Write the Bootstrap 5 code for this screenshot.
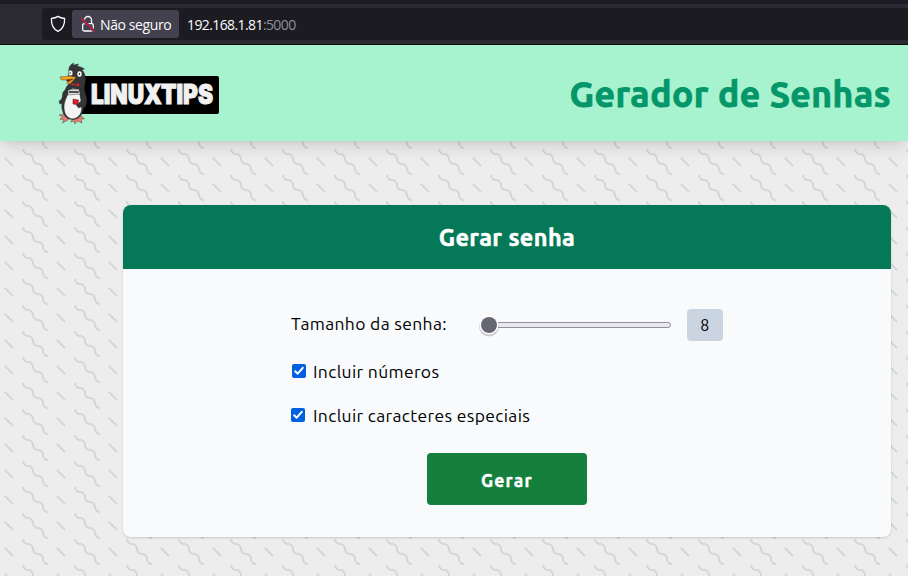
<!DOCTYPE html>
<html lang="pt-BR">
<head>
<meta charset="utf-8">
<meta name="viewport" content="width=device-width, initial-scale=1">
<title>Gerador de Senhas</title>
<link href="https://cdn.jsdelivr.net/npm/bootstrap@5.3.0/dist/css/bootstrap.min.css" rel="stylesheet">
<style>
body{height:576px;overflow:hidden;color:#000;font-family:Ubuntu,"Noto Sans",sans-serif;background:#ededed url("data:image/svg+xml,%3Csvg xmlns='http://www.w3.org/2000/svg' width='52' height='26'%3E%3Cpath fill='%23d3d8d7' d='M10 10c0-2.21-1.79-4-4-4-3.314 0-6-2.686-6-6h2c0 2.21 1.79 4 4 4 3.314 0 6 2.686 6 6 0 2.21 1.79 4 4 4 3.314 0 6 2.686 6 6 0 2.21 1.79 4 4 4v2c-3.314 0-6-2.686-6-6 0-2.21-1.79-4-4-4-3.314 0-6-2.686-6-6zm25.464-1.95l8.486 8.486-1.414 1.414-8.486-8.486 1.414-1.414z'/%3E%3C/svg%3E") 22px 19px}
.browser-bar{height:45px;padding:4px 0 5px 42px;background:#2b2a33;border-top:4px solid #1c1b22;border-bottom:1px solid #0c0c0d;font:14px "Open Sans",sans-serif}
.address{height:32px;background:#1c1b22;border-radius:4px 0 0 4px;color:#fbfbfe;padding-left:8px}
.security{height:28px;width:107px;background:#42414d;border-radius:3px;margin-left:6px;padding-left:8px}
.security span{letter-spacing:-.4px;margin-left:4px}
.host{margin-left:8px;letter-spacing:-.6px}
.host span{color:#8f8f9a}
.site-header{height:96px;background:#a7f3d0;padding:0 17px 0 59px;box-shadow:0 10px 15px -3px rgba(0,0,0,.1),0 4px 6px -2px rgba(0,0,0,.05)}
.site-title{font-size:35.5px;font-weight:700;color:#059669;letter-spacing:.53px;line-height:40px;padding-top:1px;-webkit-text-stroke:.9px #059669}
.panel{width:768px;height:332px;margin:64px 0 0 123px;border-radius:8px;background:#f8fafc;box-shadow:0 1px 3px rgba(0,0,0,.1),0 1px 2px rgba(0,0,0,.06)}
.panel-title{height:64px;background:#047857;font-size:23.5px;font-weight:700;letter-spacing:.4px;-webkit-text-stroke:.5px #fff}
.fields{padding:40px 0 0 168px;font-size:17.5px;line-height:28px;letter-spacing:.34px}
.size-row{height:32px}
.size-label{width:188px;padding-bottom:3px}
.size-out{width:36px;height:32px;margin-left:16px;background:#cbd5e1;border-radius:4px;font-size:16px}
.numbers-row{margin-top:16px;height:28px;padding-left:1px;gap:7px}
.special-row{margin-top:16px;height:28px;gap:8px}
.numbers-row span,.special-row span{padding-top:2px}
.go{width:160px;height:52px;margin:24px 0 0 136px;border-radius:4px;background:#15803d;font-size:17.5px;font-weight:700;letter-spacing:1.2px;-webkit-text-stroke:.4px #fff}
.go:hover{background:#166534}
</style>
</head>
<body>
<div class="browser-bar">
  <div class="address d-flex align-items-center">
    <svg width="16" height="18" viewBox="0 0 16 18" fill="none" stroke="#fbfbfe" stroke-width="1.3" stroke-linejoin="round"><path d="M8 1.400C6 2.800 3.700 3.300 1.400 3.500c-.2 5.300.8 10 6.600 12.900 5.800-2.900 6.800-7.600 6.600-12.900C12.300 3.300 10 2.800 8 1.400Z"/></svg>
    <div class="security d-flex align-items-center">
      <svg width="16" height="18" viewBox="0 0 16 18" fill="none" stroke="#fbfbfe" stroke-width="1.3"><rect x="2.700" y="8.600" width="10.600" height="7.400" rx="1.500"/><path d="M4.500 8V5a3.500 3.500 0 0 1 7 0v3.500"/><path d="M1 3 14.500 16.500" stroke="#42414d" stroke-width="2.800"/><path d="M1 3 14.500 16.500" stroke="#e5123d"/></svg>
      <span>Não seguro</span>
    </div>
    <div class="host">192.168.1.81<span>:5000</span></div>
  </div>
</div>
<header class="site-header d-flex align-items-center justify-content-between position-relative">
  <svg width="160" height="62" viewBox="0 0 160 62" role="img" aria-label="LinuxTips" overflow="visible">
    <rect x="20" y="14" width="140" height="38" rx="2"/>
    <text x="32" y="42" font-family="Inter,Liberation Sans,sans-serif" font-size="26.500" font-weight="900" fill="#f1f1f1" stroke="#f1f1f1" stroke-width="1" textLength="122" lengthAdjust="spacingAndGlyphs">LINUXTIPS</text>
    <g stroke="#222" stroke-width=".4" transform="scale(.82 1)">
      <path fill="#ed7d70" d="m8 52-8 1 5 2-4 2 5 1-2 3 7-3 2-5Zm12 2-6 6 5-1v3l4-3 5 2-1-4 4 0-6-5Z"/>
      <path fill="#343638" d="M8 28C2 30 6 35 2 38l-2 1 1 3c5 0 8-3 9-9Z"/>
      <path fill="#343638" d="M12 8c0-4 3-6 6-7l-1 2 7-1-2 2c4 1 6 1 9 3l-3 1c5 4 5 10 3 16-1 4 2 8 3 13 0 5-1 8-4 9-1 5-4 10-9 11-10 2-15-2-17-9-2-5 1-10 3-14-1-6 2-10 6-13-2-5-2-8-1-13Z"/>
      <path fill="#f4f4f4" d="M13 28c-3 7-9 13-6 22 3 9 16 9 20 0 2-7-1-15-3-22-4-2-8-2-11 0Z"/>
      <path fill="#343638" d="M26 25c7 5 10 14 4 19l-6 2-3-3 6-4Z"/>
      <circle cx="14" cy="11" r="2.800" fill="#fff"/><circle cx="25" cy="12" r="3" fill="#fff"/>
      <circle cx="13.500" cy="11" r=".6"/><circle cx="25" cy="12" r=".7"/>
      <path fill="#f0a51b" d="m1 15 12-1 8 1-2 2-5 5-5-1 4-3-10 0Z"/>
      <path fill="#7d241b" d="m9 18 8-1-6 3Z"/>
      <path fill="#c52d30" d="m15 20 4 2 6-1v4l-6-2-4 1Z"/>
      <path fill="#ddd" d="m11 28 13-1 2 5-15 1Z"/><path d="m12 30 12 0" stroke-width="1.500"/>
      <path fill="#dc1b25" d="m17 37 7 1-1 5-6-1Z"/>
    </g>
  </svg>
  <h1 class="site-title m-0">Gerador de Senhas</h1>
</header>
<main class="panel overflow-hidden">
  <h2 class="panel-title d-flex align-items-center justify-content-center text-white m-0"><span>Gerar senha</span></h2>
  <form class="fields">
    <div class="size-row d-flex align-items-center">
      <label class="size-label">Tamanho da senha:</label>
      <svg width="192" height="26" viewBox="0 0 192 26" role="img" aria-label="8">
        <rect x="2.500" y="10.500" width="189" height="5" rx="2.500" fill="#e9e9ed" stroke="#8f8f9d"/>
        <circle cx="10" cy="14.500" r="10" fill="#000" opacity=".12"/><circle cx="10" cy="14" r="10" fill="#000" opacity=".12"/>
        <circle cx="10" cy="13" r="9.700" fill="#fff"/><circle cx="10" cy="13" r="8" fill="#676774"/>
      </svg>
      <output class="size-out d-flex align-items-center justify-content-center">8</output>
    </div>
    <label class="numbers-row d-flex align-items-center">
      <svg width="14" height="14" viewBox="0 0 14 14"><rect width="14" height="14" rx="2" fill="#0060df"/><path d="m3.200 7.200 2.500 2.500 5.100-5.900" fill="none" stroke="#fff" stroke-width="2" stroke-linecap="round" stroke-linejoin="round"/></svg>
      <span>Incluir números</span>
    </label>
    <label class="special-row d-flex align-items-center">
      <svg width="14" height="14" viewBox="0 0 14 14"><rect width="14" height="14" rx="2" fill="#0060df"/><path d="m3.200 7.200 2.500 2.500 5.100-5.900" fill="none" stroke="#fff" stroke-width="2" stroke-linecap="round" stroke-linejoin="round"/></svg>
      <span>Incluir caracteres especiais</span>
    </label>
    <button type="button" class="go btn border-0 text-white px-0 pb-0 pt-1 d-block">Gerar</button>
  </form>
</main>
<script src="https://cdn.jsdelivr.net/npm/bootstrap@5.3.0/dist/js/bootstrap.bundle.min.js"></script>
</body>
</html>
